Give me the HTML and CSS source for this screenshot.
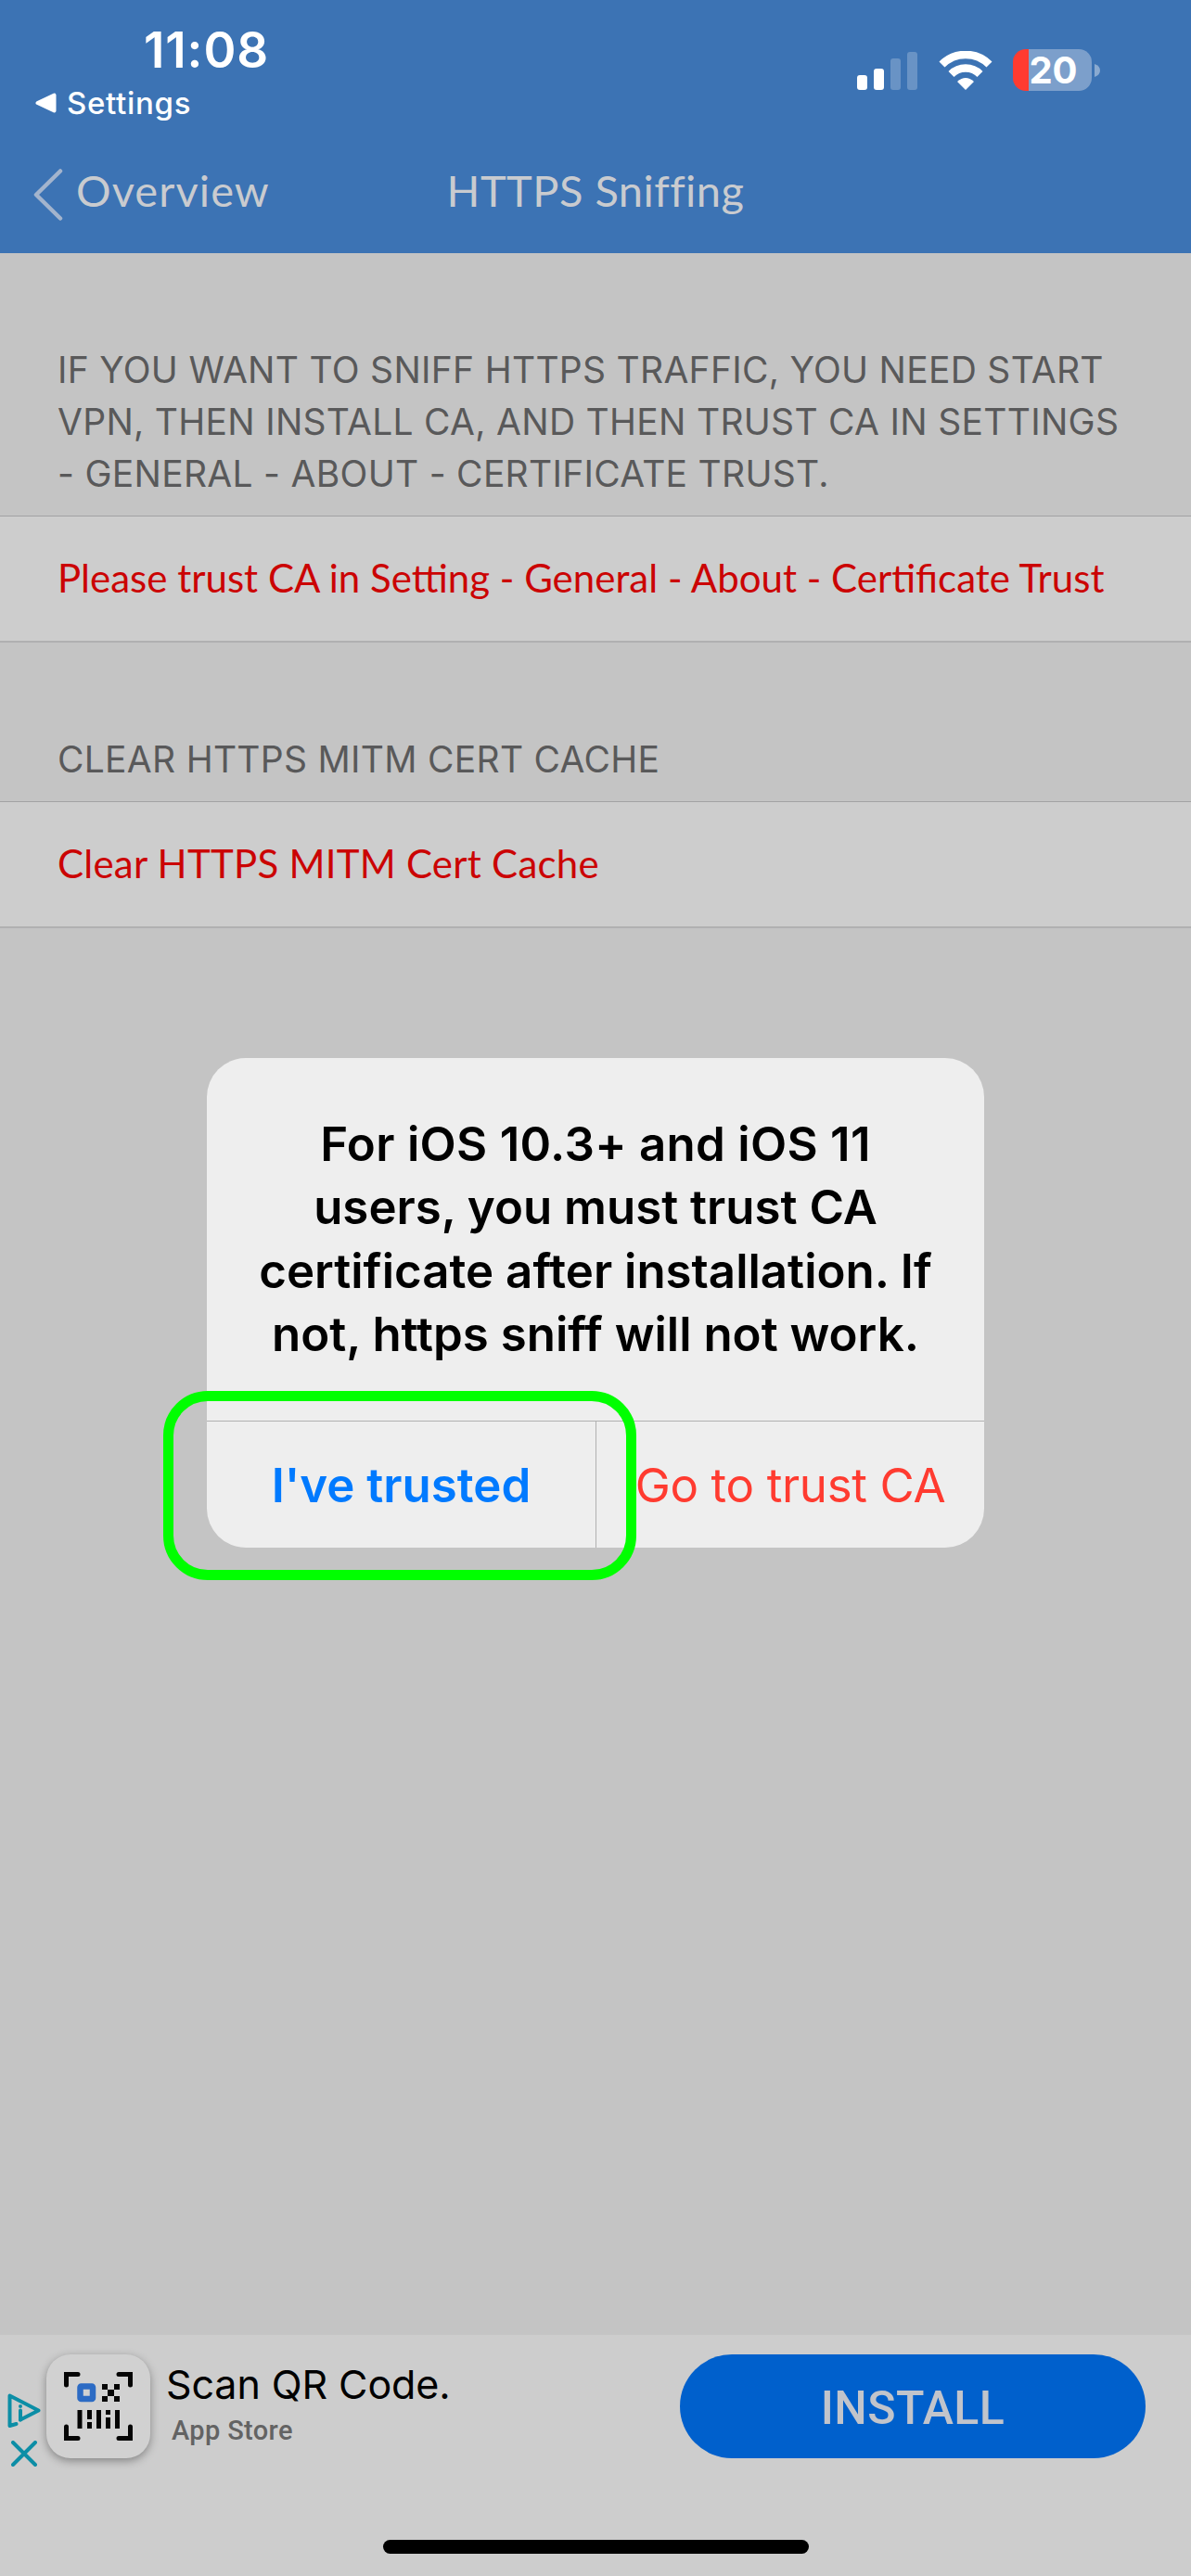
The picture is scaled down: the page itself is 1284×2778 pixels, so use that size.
FILE: index.html
```html
<!DOCTYPE html>
<html lang="en">
<head>
<meta charset="utf-8">
<title>HTTPS Sniffing</title>
<link rel="stylesheet" href="styles.css">
</head>
<body>
<div class="screen">
  <header class="header">
    <div class="status">
      <div class="status-left">
        <div class="clock">11:08</div>
        <div class="back-app">
          <svg width="23" height="22" viewBox="0 0 23 22"><path d="M20.500 2.500V19.500L2.500 11Z" fill="#fff" stroke="#fff" stroke-width="4" stroke-linejoin="round"/></svg>
          <span>Settings</span>
        </div>
      </div>
      <div class="status-right">
        <svg width="66" height="42" viewBox="0 0 66 42" fill="#fff">
          <rect x="0" y="26" width="11" height="16" rx="3"/>
          <rect x="18" y="19" width="11" height="23" rx="3"/>
          <g opacity=".23"><rect x="36" y="8" width="11" height="34" rx="3"/><rect x="54" y="1" width="11" height="41" rx="3"/></g>
        </svg>
        <svg class="wifi" width="58" height="42" viewBox="0 0 58 42" fill="none" stroke="#fff">
          <path d="M3.500 14.500A36 36 0 0 1 54.500 14.500" stroke-width="8.500"/>
          <path d="M13.500 25A22 22 0 0 1 44.500 25" stroke-width="8.500"/>
          <path d="M20 33Q29 25 38 33L29 42Z" fill="#fff" stroke="none"/>
        </svg>
        <div class="battery">20</div>
        <svg width="7" height="14" viewBox="0 0 7 14"><path d="M0 0Q6 2 6 7T0 14Z" fill="#8aaad0"/></svg>
      </div>
    </div>
    <nav class="nav">
      <div class="nav-back">
        <svg class="chevron" width="32" height="56" viewBox="0 0 32 56"><path d="M29 2.500L3 28L29 53.500" fill="none" stroke="#a3b4cd" stroke-width="4.500" stroke-linecap="round" stroke-linejoin="round"/></svg>
        <span class="overview">Overview</span>
      </div>
      <h1 class="nav-title">HTTPS Sniffing</h1>
    </nav>
  </header>
  <main class="content">
    <p class="section-label">IF YOU WANT TO SNIFF HTTPS TRAFFIC, YOU NEED START<br>VPN, THEN INSTALL CA, AND THEN TRUST CA IN SETTINGS<br>- GENERAL - ABOUT - CERTIFICATE TRUST.</p>
    <div class="row">Please trust CA in Setting - General - About - Certificate Trust</div>
    <p class="section-label">CLEAR HTTPS MITM CERT CACHE</p>
    <div class="row row-clear">Clear HTTPS MITM Cert Cache</div>
  </main>
  <footer class="ad">
    <div class="ad-marks">
      <svg width="36" height="37" viewBox="0 0 36 37" fill="none" stroke="#0c8ea6" stroke-width="4" stroke-linecap="round" stroke-linejoin="round"><path d="M9.500 33L2.500 35V2.500L33.500 18.500L14 28.500"/><path d="M14 18.500V28.500M14 14V14.100"/></svg>
      <svg width="28" height="28" viewBox="0 0 28 28" stroke="#0c8ea6" stroke-width="4" stroke-linecap="round"><path d="M2 2L26 26M26 2L2 26"/></svg>
    </div>
    <div class="app-icon">
      <svg width="74" height="74" viewBox="0 0 74 74">
        <path d="M2.500 14V2.500H15M59 2.500H71.500V14M2.500 59V71.500H15M59 71.500H71.500V59" fill="none" stroke="#050505" stroke-width="5" stroke-linecap="round"/>
        <rect x="17.500" y="15.500" width="13.500" height="13.500" rx="1" fill="none" stroke="#2c6bc4" stroke-width="6.500"/>
        <path d="M41 13h6v6h-6zM54 13h6v6h-6zM47 19h7v7h-7zM41 26h6v6h-6zM54 26h6v6h-6zM14.500 41h5v20h-5zM25 41h5v10h-5zM25 54h5v7h-5zM35 41h5v20h-5zM45 41h5v5h-5zM45 49h5v12h-5zM55 41h5v20h-5z" fill="#050505"/>
      </svg>
    </div>
    <div class="ad-text">
      <div class="ad-title">Scan QR Code.</div>
      <div class="ad-store">App Store</div>
    </div>
    <div class="install">INSTALL</div>
    <div class="home-bar"></div>
  </footer>
  <section class="alert">
    <h2 class="alert-title"><span class="first-line">For iOS 10.3+ and iOS 11</span><br>users, you must trust CA<br>certificate after installation. If<br>not, https sniff will not work.</h2>
    <div class="alert-buttons">
      <div class="btn confirm">I've trusted</div>
      <div class="btn danger">Go to trust CA</div>
    </div>
  </section>
  <div class="highlight"></div>
</div>
</body>
</html>
```
FILE: styles.css
```css
* { box-sizing: border-box; }
body { margin: 0; font-family: Inter, sans-serif; }
svg { display: block; flex: none; }
.screen { position: relative; display: flex; flex-direction: column; width: 1284px; height: 2778px; overflow: hidden; background: #c4c4c4; white-space: nowrap; }

/* Status bar and navigation */
.header { flex: none; height: 273px; background: #3c73b4; color: #fff; }
.status { display: flex; justify-content: space-between; height: 175px; padding: 24px 97px 0 38px; }
.clock { height: 60px; padding-left: 117px; font-size: 53px; line-height: 60px; font-weight: 600; letter-spacing: .9px; }
.back-app { display: flex; align-items: center; gap: 11px; margin-top: 7px; font-size: 33px; line-height: 40px; font-weight: 500; letter-spacing: .7px; }
.status-right { display: flex; align-items: center; height: 45px; margin-top: 29px; }
.wifi { margin: 0 22px; }
.battery { display: flex; align-items: center; justify-content: center; width: 85px; height: 45px; margin-right: 3px; padding-left: 2px; border-radius: 14px; background: linear-gradient(to right, #ff3b30 17px, #7c9fcb 17px); font-size: 40px; line-height: 45px; font-weight: 700; }
.nav { position: relative; display: flex; justify-content: center; height: 98px; color: #c9cbcf; font-family: Optima, Lato, sans-serif; font-size: 47px; line-height: 61px; letter-spacing: .45px; }
.nav-back { position: absolute; left: 36px; top: 0; display: flex; gap: 14px; }
.chevron { margin-top: 7px; }
.overview { letter-spacing: 1.1px; }
.nav-title { margin: 0; font-size: inherit; font-weight: 400; }

/* Settings list */
.content { flex: 1; }
.section-label { margin: 0; padding: 98px 62px 17px; color: #59595a; font-size: 39px; line-height: 56px; letter-spacing: .28px; }
.row { display: flex; align-items: center; height: 137px; padding: 0 62px 2px; border-top: 1px solid #a2a2a4; border-bottom: 2px solid #b0b0b1; background: #cdcdcd; color: #cb0404; font-family: Optima, Lato, sans-serif; font-size: 42px; }
.row-clear { letter-spacing: .24px; }

/* Ad banner */
.ad { display: flex; position: relative; height: 260px; background: #cdcdcd; padding: 21px 49px 0 8px; }
.ad-marks { display: flex; flex-direction: column; align-items: center; gap: 14px; width: 36px; padding-top: 42px; }
.app-icon { display: flex; align-items: center; justify-content: center; width: 112px; height: 112px; margin-left: 6px; border-radius: 26px; background: #d1d1d1; box-shadow: 0 3px 10px rgba(0,0,0,.35); }
.ad-text { margin-left: 17px; flex: 1; }
.ad-title { font-size: 43px; line-height: 50px; margin-top: 7px; letter-spacing: -.1px; }
.ad-store { padding-left: 6px; margin-top: 7px; font: 500 29px/36px Roboto, sans-serif; letter-spacing: .35px; color: #636363; }
.install { display: flex; align-items: center; justify-content: center; width: 502px; height: 112px; padding-top: 3px; border-radius: 56px; background: #0060cc; color: #c1c4cb; font: 500 50px/60px Roboto, sans-serif; letter-spacing: .5px; }
.home-bar { position: absolute; left: 413px; top: 221px; width: 459px; height: 15px; border-radius: 8px; background: #000; }

/* Alert dialog */
.alert { position: absolute; left: 223px; top: 1141px; width: 838px; height: 528px; overflow: hidden; border-radius: 42px; background: #eee; }
.alert-title { height: 391px; margin: 0; padding-top: 59px; text-align: center; font-size: 51px; line-height: 68.3px; font-weight: 600; }
.first-line { letter-spacing: .3px; }
.alert-buttons { display: grid; grid-template-columns: 420px 1fr; height: 137px; border-top: 1px solid #b0b0b1; font-size: 51px; }
.btn { display: flex; align-items: center; justify-content: center; }
.confirm { border-right: 1px solid #b0b0b1; color: #007aff; font-weight: 600; }
.danger { color: #ff3b30; letter-spacing: -.35px; }
.highlight { position: absolute; left: 176px; top: 1500px; width: 510px; height: 204px; border: 11px solid #0f0; border-radius: 48px; }
```
